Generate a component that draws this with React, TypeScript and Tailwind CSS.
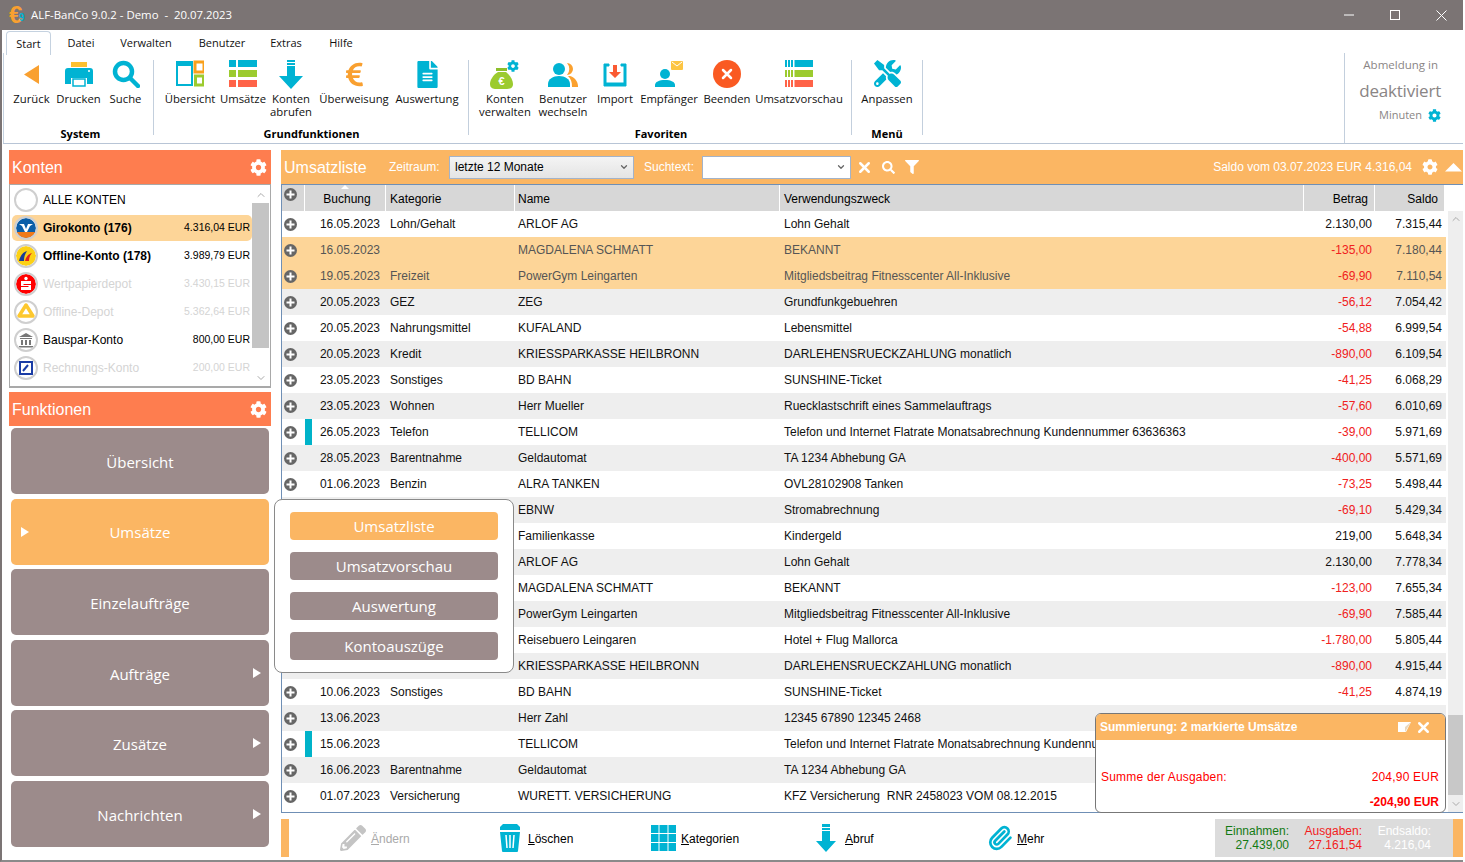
import { ReactNode } from "react";
import { FaCog, FaEuroSign, FaFileAlt, FaFilter, FaPencilAlt, FaSearch, FaTools } from "react-icons/fa";
import { ChevronDown, ChevronUp, Paperclip, X } from "lucide-react";

const TEAL = "#00b3d3";

interface Row {
  date: string;
  cat: string;
  name: string;
  text: string;
  amount: string;
  saldo: string;
  selected?: boolean;
  mark?: boolean;
}

const rows: Row[] = [
  { date: "16.05.2023", cat: "Lohn/Gehalt", name: "ARLOF AG", text: "Lohn Gehalt", amount: "2.130,00", saldo: "7.315,44" },
  { date: "16.05.2023", cat: "", name: "MAGDALENA SCHMATT", text: "BEKANNT", amount: "-135,00", saldo: "7.180,44", selected: true },
  { date: "19.05.2023", cat: "Freizeit", name: "PowerGym Leingarten", text: "Mitgliedsbeitrag Fitnesscenter All-Inklusive", amount: "-69,90", saldo: "7.110,54", selected: true },
  { date: "20.05.2023", cat: "GEZ", name: "ZEG", text: "Grundfunkgebuehren", amount: "-56,12", saldo: "7.054,42" },
  { date: "20.05.2023", cat: "Nahrungsmittel", name: "KUFALAND", text: "Lebensmittel", amount: "-54,88", saldo: "6.999,54" },
  { date: "20.05.2023", cat: "Kredit", name: "KRIESSPARKASSE HEILBRONN", text: "DARLEHENSRUECKZAHLUNG monatlich", amount: "-890,00", saldo: "6.109,54" },
  { date: "23.05.2023", cat: "Sonstiges", name: "BD BAHN", text: "SUNSHINE-Ticket", amount: "-41,25", saldo: "6.068,29" },
  { date: "23.05.2023", cat: "Wohnen", name: "Herr Mueller", text: "Ruecklastschrift eines Sammelauftrags", amount: "-57,60", saldo: "6.010,69" },
  { date: "26.05.2023", cat: "Telefon", name: "TELLICOM", text: "Telefon und Internet Flatrate Monatsabrechnung Kundennummer 63636363", amount: "-39,00", saldo: "5.971,69", mark: true },
  { date: "28.05.2023", cat: "Barentnahme", name: "Geldautomat", text: "TA 1234 Abhebung GA", amount: "-400,00", saldo: "5.571,69" },
  { date: "01.06.2023", cat: "Benzin", name: "ALRA TANKEN", text: "OVL28102908 Tanken", amount: "-73,25", saldo: "5.498,44" },
  { date: "", cat: "", name: "EBNW", text: "Stromabrechnung", amount: "-69,10", saldo: "5.429,34" },
  { date: "", cat: "", name: "Familienkasse", text: "Kindergeld", amount: "219,00", saldo: "5.648,34" },
  { date: "", cat: "", name: "ARLOF AG", text: "Lohn Gehalt", amount: "2.130,00", saldo: "7.778,34" },
  { date: "", cat: "", name: "MAGDALENA SCHMATT", text: "BEKANNT", amount: "-123,00", saldo: "7.655,34" },
  { date: "", cat: "", name: "PowerGym Leingarten", text: "Mitgliedsbeitrag Fitnesscenter All-Inklusive", amount: "-69,90", saldo: "7.585,44" },
  { date: "", cat: "", name: "Reisebuero Leingaren", text: "Hotel + Flug Mallorca", amount: "-1.780,00", saldo: "5.805,44" },
  { date: "", cat: "", name: "KRIESSPARKASSE HEILBRONN", text: "DARLEHENSRUECKZAHLUNG monatlich", amount: "-890,00", saldo: "4.915,44" },
  { date: "10.06.2023", cat: "Sonstiges", name: "BD BAHN", text: "SUNSHINE-Ticket", amount: "-41,25", saldo: "4.874,19" },
  { date: "13.06.2023", cat: "", name: "Herr Zahl", text: "12345 67890 12345 2468", amount: "", saldo: "" },
  { date: "15.06.2023", cat: "", name: "TELLICOM", text: "Telefon und Internet Flatrate Monatsabrechnung Kundennummer 63636363", amount: "", saldo: "", mark: true },
  { date: "16.06.2023", cat: "Barentnahme", name: "Geldautomat", text: "TA 1234 Abhebung GA", amount: "", saldo: "" },
  { date: "01.07.2023", cat: "Versicherung", name: "WURETT. VERSICHERUNG", text: "KFZ Versicherung  RNR 2458023 VOM 08.12.2015", amount: "", saldo: "" },
];

const GRID = "grid grid-cols-[23px_81px_129px_265px_524px_71px_70px]";

function PlusIcon() {
  return (
    <svg width="13" height="13" viewBox="0 0 13 13">
      <circle cx="6.5" cy="6.5" r="6.5" fill="#666" />
      <path d="M6.5 2.5v8M2.5 6.5h8" stroke="#fff" strokeWidth="2" />
    </svg>
  );
}

function RibbonItem({ w, icon, children }: { w: string; icon: ReactNode; children: ReactNode }) {
  return (
    <div className={`flex flex-col items-center shrink-0 ${w}`}>
      <div className="h-[32px] flex justify-center">{icon}</div>
      <div className="text-center text-[11.3px] leading-[13px] whitespace-nowrap text-[#111]">{children}</div>
    </div>
  );
}

function RibbonGroup({ label, w, children }: { label: string; w: string; children: ReactNode }) {
  return (
    <div className={`flex flex-col shrink-0 ${w}`}>
      <div className="flex h-[67px]">{children}</div>
      <div className="text-center text-[11px] leading-[14px] font-bold text-black">{label}</div>
    </div>
  );
}

function Sep() {
  return <div className="w-px h-[75px] bg-[#c3cfdd] shrink-0" />;
}

function BarsIcon({ stripes }: { stripes?: boolean }) {
  const bars = [TEAL, "#9ccb2f", "#ff6348"];
  return (
    <svg width="28" height="28" viewBox="0 0 28 28">
      {bars.map((c, i) => (
        <g key={c} fill={c}>
          {stripes ? (
            <>
              <rect x="0" y={i * 10} width="2" height="7" />
              <rect x="3" y={i * 10} width="2" height="7" />
              <rect x="6" y={i * 10} width="2" height="7" />
              <rect x="9.5" y={i * 10} width="18.5" height="7" />
            </>
          ) : (
            <>
              <rect x="0" y={i * 10} width="7" height="7" />
              <rect x="9" y={i * 10} width="19" height="7" />
            </>
          )}
        </g>
      ))}
    </svg>
  );
}

function Ribbon() {
  const tab = "flex items-center justify-center pt-[4px]";
  return (
    <div className="h-[114px] flex flex-col border-b border-[#b8c5d6] ml-px">
      <div className="flex h-[23px] pl-[3px] text-[11px] text-[#111]">
        <div className="w-[45px] h-[24px] mt-px border border-b-0 border-[#c5d2e0] rounded-t-sm bg-white flex items-center justify-center pt-[2px] z-10">Start</div>
        <div className={`w-[60px] ${tab}`}>Datei</div>
        <div className={`w-[70px] ${tab}`}>Verwalten</div>
        <div className={`w-[82px] ${tab}`}>Benutzer</div>
        <div className={`w-[46px] ${tab}`}>Extras</div>
        <div className={`w-[64px] ${tab}`}>Hilfe</div>
      </div>
      <div className="flex pt-[7px] border-l border-[#c5d2e0] grow">
        <div className="w-[4px] shrink-0" />
        <RibbonGroup label="System" w="w-[145px]">
          <RibbonItem w="w-[47px]" icon={
            <svg width="16" height="20" viewBox="0 0 16 20" className="mt-[5px]"><path d="M15 0v19L0 9.5z" fill="#f9a030" /></svg>
          }>Zurück</RibbonItem>
          <RibbonItem w="w-[47px]" icon={
            <svg width="28" height="28" viewBox="0 0 28 28">
              <rect x="6" y="2" width="16" height="5" fill="#fdc02f" />
              <path d="M3 8h22a3 3 0 0 1 3 3v13h-6v-6H6v6H0V11a3 3 0 0 1 3-3z" fill={TEAL} />
              <rect x="8" y="19" width="12" height="7" fill="#fff" stroke={TEAL} strokeWidth="1.5" />
              <circle cx="24" cy="11" r="1" fill="#fff" />
            </svg>
          }>Drucken</RibbonItem>
          <RibbonItem w="w-[47px]" icon={
            <svg width="28" height="28" viewBox="0 0 28 28">
              <circle cx="11.5" cy="11.5" r="8.5" fill="none" stroke={TEAL} strokeWidth="4.5" />
              <path d="M18 18l8 8" stroke={TEAL} strokeWidth="4.5" strokeLinecap="round" />
            </svg>
          }>Suche</RibbonItem>
        </RibbonGroup>
        <div className="w-px shrink-0 mr-[10px] bg-[#c3cfdd] h-[75px]" />
        <RibbonGroup label="Grundfunktionen" w="w-[295px]">
          <RibbonItem w="w-[52px]" icon={
            <svg width="28" height="28" viewBox="0 0 28 28">
              <rect x="1" y="2" width="15" height="23" fill="#fff" stroke={TEAL} strokeWidth="2" />
              <rect x="0" y="1" width="17" height="5" fill={TEAL} />
              <rect x="19" y="2" width="9" height="10" fill="#fff" stroke="#f9a01b" strokeWidth="3" />
              <rect x="19.5" y="16" width="8" height="9" fill="#fff" stroke="#9ccb2f" strokeWidth="3" />
            </svg>
          }>Übersicht</RibbonItem>
          <RibbonItem w="w-[54px]" icon={<BarsIcon />}>Umsätze</RibbonItem>
          <RibbonItem w="w-[42px]" icon={
            <svg width="24" height="30" viewBox="0 0 24 30">
              <path d="M8 0h8v2H8zM8 3h8v2H8zM8 6h8v10h8L12 29 0 16h8z" fill={TEAL} />
            </svg>
          }>Konten<br />abrufen</RibbonItem>
          <RibbonItem w="w-[84px]" icon={<FaEuroSign size={27} color="#f9a030" className="mt-[1px]" />}>Überweisung</RibbonItem>
          <RibbonItem w="w-[62px]" icon={<FaFileAlt size={27} color={TEAL} className="mt-[1px]" />}>Auswertung</RibbonItem>
        </RibbonGroup>
        <div className="w-[9px] shrink-0" />
        <Sep />
        <div className="w-[8px] shrink-0" />
        <RibbonGroup label="Favoriten" w="w-[368px]">
          <RibbonItem w="w-[56px]" icon={
            <svg width="30" height="30" viewBox="0 0 30 30">
              <rect x="6" y="8" width="11" height="3" fill="#8dbf2a" />
              <path d="M8 12h8c4 3 7 8 7 12 0 4-3 5-6 5H6c-3 0-6-1-6-5 0-4 3-9 8-12z" fill="#9ccb2f" />
              <text x="11.5" y="25" textAnchor="middle" fontSize="11" fontWeight="700" fill="#fff" fontFamily="'Liberation Sans', sans-serif">€</text>
              <g transform="translate(17 0)"><FaCog size={12} color={TEAL} /></g>
            </svg>
          }>Konten<br />verwalten</RibbonItem>
          <RibbonItem w="w-[60px]" icon={
            <svg width="30" height="26" viewBox="0 0 30 26" className="mt-[2px]">
              <path d="M19 1a6 6 0 0 1 0 12 9 9 0 0 0 0-12z" fill="#fba12f" />
              <path d="M22 14c4 1 8 5 8 10v1h-6c0-5-1-8-4-11z" fill="#fba12f" />
              <circle cx="11" cy="7" r="6" fill={TEAL} />
              <path d="M0 25v-3c0-5 5-8 11-8s11 3 11 8v3z" fill={TEAL} />
            </svg>
          }>Benutzer<br />wechseln</RibbonItem>
          <RibbonItem w="w-[44px]" icon={
            <svg width="24" height="24" viewBox="0 0 24 24" className="mt-[3px]">
              <path d="M1 1h5v2H3v17h18V3h-3V1h5v22H1z" fill={TEAL} stroke={TEAL} strokeWidth="1" />
              <path d="M10 2h4v7h4l-6 6-6-6h4z" fill="#fa5a32" />
            </svg>
          }>Import</RibbonItem>
          <RibbonItem w="w-[64px]" icon={
            <svg width="28" height="28" viewBox="0 0 28 28">
              <rect x="16" y="1" width="12" height="9" rx="1" fill="#fdc543" />
              <path d="M17 2l5 4 5-4" fill="none" stroke="#fff" strokeWidth="1" />
              <circle cx="10" cy="14" r="5" fill={TEAL} />
              <path d="M0 27v-2c0-3 4-5 10-5s10 2 10 5v2z" fill={TEAL} />
            </svg>
          }>Empfänger</RibbonItem>
          <RibbonItem w="w-[52px]" icon={
            <svg width="28" height="28" viewBox="0 0 28 28">
              <circle cx="14" cy="14" r="14" fill="#fa5a22" />
              <path d="M10 10l8 8M18 10l-8 8" stroke="#fff" strokeWidth="2.5" strokeLinecap="round" />
            </svg>
          }>Beenden</RibbonItem>
          <RibbonItem w="w-[92px]" icon={<BarsIcon stripes />}>Umsatzvorschau</RibbonItem>
        </RibbonGroup>
        <div className="w-[6px] shrink-0" />
        <Sep />
        <RibbonGroup label="Menü" w="w-[70px]">
          <div className="w-[70px] flex justify-center">
            <RibbonItem w="w-[60px]" icon={<FaTools size={27} color={TEAL} />}>Anpassen</RibbonItem>
          </div>
        </RibbonGroup>
        <Sep />
        <div className="grow" />
        <div className="w-[119px] shrink-0 border-l border-[#c3cfdd] -mt-[7px] flex flex-col items-end pr-[25px] pt-[4px] text-[#8a8585]">
          <div className="text-[11.5px] leading-[16px]">Abmeldung in</div>
          <div className="text-[17px] leading-[24px] mt-[6px] -mr-[3px] tracking-[-0.2px]">deaktiviert</div>
          <div className="flex items-center gap-[6px] text-[11px] leading-[16px] mt-[4px] -mr-[3px]">Minuten <FaCog size={13} color={TEAL} /></div>
        </div>
      </div>
    </div>
  );
}

function Logo({ children }: { children?: ReactNode }) {
  return (
    <div className="w-[24px] h-[24px] rounded-full border-2 border-[#cfcfcf] bg-white flex items-center justify-center overflow-hidden shrink-0">
      {children}
    </div>
  );
}

const accounts: { name: string; value: string; bold?: boolean; dim?: boolean; selected?: boolean; logo?: ReactNode }[] = [
  { name: "ALLE KONTEN", value: "" },
  {
    name: "Girokonto (176)", value: "4.316,04 EUR", bold: true, selected: true,
    logo: (
      <svg width="20" height="20" viewBox="0 0 20 20">
        <circle cx="10" cy="10" r="10" fill="#0b5ea8" />
        <path d="M0 14h20v6H0z" fill="#f07a1a" />
        <path d="M3 6h5l2 5 2-5h5l-3 2-3 6H9L6 8z" fill="#fff" />
      </svg>
    ),
  },
  {
    name: "Offline-Konto (178)", value: "3.989,79 EUR", bold: true,
    logo: (
      <svg width="20" height="20" viewBox="0 0 20 20">
        <circle cx="10" cy="10" r="10" fill="#fcd116" />
        <path d="M3 15c1-5 4-9 8-10-2 3-3 6-3 10z" fill="#1a3e94" />
        <path d="M9 15c1-4 3-7 7-8-2 2-3 5-3 8z" fill="#e2231a" />
      </svg>
    ),
  },
  {
    name: "Wertpapierdepot", value: "3.430,15 EUR", dim: true,
    logo: (
      <svg width="20" height="20" viewBox="0 0 20 20">
        <circle cx="10" cy="10" r="10" fill="#f00" />
        <circle cx="10" cy="4.5" r="1.7" fill="#fff" />
        <path d="M5 7h10v3H7.5v1H15v5H5v-3h7.5v-1H5z" fill="#fff" />
      </svg>
    ),
  },
  {
    name: "Offline-Depot", value: "5.362,64 EUR", dim: true,
    logo: (
      <svg width="20" height="20" viewBox="0 0 20 20">
        <path d="M10 3l7 11H3z" fill="none" stroke="#fdc82f" strokeWidth="3.5" strokeLinejoin="round" />
      </svg>
    ),
  },
  {
    name: "Bauspar-Konto", value: "800,00 EUR",
    logo: (
      <svg width="16" height="16" viewBox="0 0 16 16">
        <path d="M8 1l7 4H1zM2 6h12v1H2zM3 8h2v5H3zM7 8h2v5H7zM11 8h2v5h-2zM1 14h14v1.500H1z" fill="#777" />
      </svg>
    ),
  },
  {
    name: "Rechnungs-Konto", value: "200,00 EUR", dim: true,
    logo: (
      <svg width="14" height="14" viewBox="0 0 14 14">
        <rect x="1" y="1" width="12" height="12" fill="#fff" stroke="#1b3da6" strokeWidth="2" />
        <path d="M4 10l5-6" stroke="#1b3da6" strokeWidth="2" />
      </svg>
    ),
  },
];

function PanelHeader({ title }: { title: string }) {
  return (
    <div className="h-[34px] bg-[#fe7d4f] flex items-center justify-between pl-[3px] pr-[4px] text-white text-[16px]">
      <span className="mt-[2.5px]">{title}</span>
      <FaCog size={17} color="#fff" />
    </div>
  );
}

function AccountList() {
  return (
    <div className="h-[204px] border border-[#a9a9a9] border-b-2 flex bg-white">
      <div className="w-[242px] shrink-0 pl-[2px] pt-px flex flex-col">
        {accounts.map((a) => (
          <div
            key={a.name}
            className={`h-[26px] my-px flex items-center pl-[2px] pr-[2px] rounded-[5px] ${a.selected ? "bg-[#fdd598]" : ""}`}
          >
            <Logo>{a.logo}</Logo>
            <span className={`ml-[5px] grow text-[12px] ${a.bold ? "font-bold text-black" : a.dim ? "text-[#d4d4d4]" : "text-black"}`}>{a.name}</span>
            <span className={`text-[10.5px] ${a.dim ? "text-[#d4d4d4]" : "text-black"}`}>{a.value}</span>
          </div>
        ))}
      </div>
      <div className="w-[17px] flex flex-col items-center text-[#aaa]">
        <div className="h-[18px] pt-[2px] flex items-center"><ChevronUp size={12} /></div>
        <div className="w-full h-[145px] bg-[#c4c4c4]" />
        <div className="grow flex items-end pb-[2px]"><ChevronDown size={12} /></div>
      </div>
    </div>
  );
}

function FnButton({ label, active, arrow }: { label: string; active?: boolean; arrow?: "left" | "right" }) {
  return (
    <div className={`relative h-[66px] rounded-[5px] flex items-center justify-center pt-[2px] text-[15px] text-white font-['Open_Sans',sans-serif] ${active ? "bg-[#fbb663]" : "bg-[#9c8b8b]"}`}>
      {label}
      {arrow && (
        <svg width="8" height="10" viewBox="0 0 8 10" className={`absolute top-[28px] ${arrow === "left" ? "left-[10px]" : "right-[8px]"}`}>
          <path d="M0 0l8 5-8 5z" fill="#fff" />
        </svg>
      )}
    </div>
  );
}

function Sidebar() {
  return (
    <div className="w-[262px] ml-[7px] shrink-0 flex flex-col">
      <PanelHeader title="Konten" />
      <AccountList />
      <div className="mt-[4px]"><PanelHeader title="Funktionen" /></div>
      <div className="mt-[2px] px-[2px] flex flex-col gap-[4.6px]">
        <FnButton label="Übersicht" />
        <FnButton label="Umsätze" active arrow="left" />
        <FnButton label="Einzelaufträge" />
        <FnButton label="Aufträge" arrow="right" />
        <FnButton label="Zusätze" arrow="right" />
        <FnButton label="Nachrichten" arrow="right" />
      </div>
    </div>
  );
}

function Toolbar() {
  return (
    <div className="h-[34px] bg-[#fbb663] flex items-center text-white pl-[3px]">
      <span className="text-[16px] w-[105px] shrink-0 mt-[2px]">Umsatzliste</span>
      <span className="text-[12px] w-[60px] shrink-0">Zeitraum:</span>
      <div className="w-[185px] h-[23px] shrink-0 border border-[#a3b3c9] bg-gradient-to-b from-[#f4f4f4] to-[#e4e4e4] flex items-center justify-between pl-[5px] pr-[4px] text-[12px] text-black">
        letzte 12 Monate
        <ChevronDown size={10} color="#666" strokeWidth={3} />
      </div>
      <span className="text-[12px] w-[58px] ml-[10px] shrink-0">Suchtext:</span>
      <div className="w-[149px] h-[23px] shrink-0 border border-[#a3b3c9] bg-white flex items-center justify-end pr-[4px]">
        <ChevronDown size={10} color="#666" strokeWidth={3} />
      </div>
      <X size={17} color="#fff" strokeWidth={3.500} className="ml-[5px] shrink-0" />
      <FaSearch size={13} color="#fff" className="ml-[9px] shrink-0" />
      <FaFilter size={14} color="#fff" className="ml-[10px] shrink-0" />
      <div className="grow text-right text-[12px]">Saldo vom 03.07.2023 EUR 4.316,04</div>
      <FaCog size={16} color="#fff" className="ml-[10px] shrink-0" />
      <svg width="17" height="9" viewBox="0 0 17 9" className="ml-[7px] mr-px shrink-0"><path d="M8.500 0L17 8.500H0z" fill="#fff" /></svg>
    </div>
  );
}

function HeaderCell({ children, className = "" }: { children?: ReactNode; className?: string }) {
  return <div className={`bg-[#d7d7d7] border-r border-white flex items-center pt-[2px] ${className}`}>{children}</div>;
}

function TxRow({ row, index }: { row: Row; index: number }) {
  const bg = row.selected ? "bg-[#fdd598]" : index % 2 ? "bg-[#eeeeee]" : "bg-white";
  const tone = row.selected ? "text-[#555]" : "text-[#111]";
  return (
    <div className={`${GRID} h-[26px] items-center text-[12px] ${bg} ${tone}`}>
      <div className="pl-[2px] flex items-center h-full"><PlusIcon /></div>
      <div className="relative h-full flex items-center justify-end pr-[6px]">
        {row.mark && <div className="absolute left-0 top-0 w-[7px] h-full bg-[#00b3c9]" />}
        {row.date}
      </div>
      <div className="pl-[4px] truncate">{row.cat}</div>
      <div className="pl-[3px] truncate">{row.name}</div>
      <div className="pl-[4px] whitespace-pre truncate">{row.text}</div>
      <div className={`text-right pr-[3px] ${row.amount.startsWith("-") ? "text-[#f02020]" : ""}`}>{row.amount}</div>
      <div className="text-right pr-[3px]">{row.saldo}</div>
    </div>
  );
}

function Table() {
  return (
    <div className="h-[629px] border-t border-b border-l border-[#6f8fb5] flex">
      <div className="w-[1164px] shrink-0">
        <div className={`${GRID} h-[26px] text-[12px] text-black`}>
          <HeaderCell className="pl-[2px] !pt-0 !items-start"><div className="mt-[3px]"><PlusIcon /></div></HeaderCell>
          <HeaderCell className="relative justify-center pl-[4px]">
            <svg width="8" height="4" viewBox="0 0 8 4" className="absolute top-0 left-[36px]"><path d="M4 0l4 4H0z" fill="#fff" /></svg>
            Buchung
          </HeaderCell>
          <HeaderCell className="pl-[4px]">Kategorie</HeaderCell>
          <HeaderCell className="pl-[3px]">Name</HeaderCell>
          <HeaderCell className="pl-[4px]">Verwendungszweck</HeaderCell>
          <HeaderCell className="justify-end pr-[6px]">Betrag</HeaderCell>
          <HeaderCell className="justify-end pr-[6px]">Saldo</HeaderCell>
        </div>
        {rows.map((r, i) => <TxRow key={i} row={r} index={i} />)}
      </div>
      <div className="w-[16px] ml-[2px] mt-[26px] bg-[#eeeeee] flex flex-col items-center text-[#aaa]">
        <div className="h-[16px] flex items-center"><ChevronUp size={12} /></div>
        <div className="mt-[488px] h-[80px] w-full bg-[#c8c8c8]" />
        <div className="grow flex items-center"><ChevronDown size={12} /></div>
      </div>
    </div>
  );
}

function ActionButton({ w, icon, label, rest, muted, gap = "ml-[6px]" }: { w: string; icon: ReactNode; label: string; rest: string; muted?: boolean; gap?: string }) {
  return (
    <div className={`flex items-center shrink-0 ${w}`}>
      {icon}
      <span className={`text-[12px] mt-[1px] ${gap} ${muted ? "text-[#aaa]" : "text-black"}`}>
        <span className="underline">{label}</span>{rest}
      </span>
    </div>
  );
}

function ActionBar() {
  return (
    <div className="mt-[6px] h-[38px] flex">
      <div className="w-[8px] bg-[#fbb663] shrink-0" />
      <div className="w-[51px] shrink-0" />
      <ActionButton w="w-[159px]" muted gap="ml-[5px]" label="Ä" rest="ndern" icon={<FaPencilAlt size={26} color="#c4c4c4" />} />
      <ActionButton w="w-[152px]" gap="ml-[7px]" label="L" rest="öschen" icon={
        <svg width="22" height="28" viewBox="0 0 22 28">
          <path d="M4 0h14l3 3v3H1V3z" fill="#00b3d3" />
          <path d="M1 8h20l-2 19a1 1 0 0 1-1 1H4a1 1 0 0 1-1-1z" fill="#00b3d3" />
          <path d="M7 11l1 13M11 11v13M15 11l-1 13" stroke="#fff" strokeWidth="1.500" />
        </svg>
      } />
      <ActionButton w="w-[165px]" gap="ml-[5px]" label="K" rest="ategorien" icon={
        <svg width="25" height="26" viewBox="0 0 25 26">
          <path d="M0 0h7.500v8H0zM8.500 0h8v8h-8zM17.500 0H25v8h-7.500zM0 9h7.500v8H0zM8.500 9h8v8h-8zM17.500 9H25v8h-7.500zM0 18h7.500v8H0zM8.500 18h8v8h-8zM17.500 18H25v8h-7.500z" fill="#00b3d3" />
        </svg>
      } />
      <ActionButton w="w-[171px]" gap="ml-[9px]" label="A" rest="bruf" icon={
        <svg width="20" height="28" viewBox="0 0 20 28">
          <path d="M6 0h8v3H6zM6 4h8v2H6zM6 7h8v10h6L10 28 0 17h6z" fill="#00b3d3" />
        </svg>
      } />
      <ActionButton w="w-[100px]" gap="ml-[4px]" label="M" rest="ehr" icon={<Paperclip size={26} color="#00b3d3" strokeWidth={2.500} />} />
      <div className="grow" />
      <div className="w-[238px] shrink-0 bg-[#dcdcdc] flex items-center pl-[10px] text-[12px] leading-[14px] text-right">
        <div className="w-[64px] text-[#137a13]">Einnahmen:<br />27.439,00</div>
        <div className="w-[73px] text-[#f21c1c]">Ausgaben:<br />27.161,54</div>
        <div className="w-[69px] text-white">Endsaldo:<br />4.216,04</div>
      </div>
      <div className="w-[10px] bg-[#fbb663] shrink-0" />
    </div>
  );
}

function SubMenu() {
  const items = ["Umsatzvorschau", "Auswertung", "Kontoauszüge"];
  const cls = "h-[28px] rounded-[4px] flex items-center justify-center pt-[1px] text-white text-[15px] font-['Open_Sans',sans-serif]";
  return (
    <div className="absolute left-[274px] top-[499px] w-[240px] h-[174px] bg-white border border-[#8a8a8a] rounded-[8px] px-[15px] pt-[12px] flex flex-col gap-[12px] z-20">
      <div className={`${cls} bg-[#fbb663]`}>Umsatzliste</div>
      {items.map((t) => <div key={t} className={`${cls} bg-[#9c8b8b]`}>{t}</div>)}
    </div>
  );
}

function SummaryPopup() {
  return (
    <div className="absolute left-[1095px] top-[713px] w-[351px] h-[100px] bg-white border border-[#777] rounded-[6px] overflow-hidden z-20 text-[12px]">
      <div className="h-[26px] bg-[#fbb663] text-white font-bold flex items-center pl-[4px] pr-[13px]">
        <span className="grow">Summierung: 2 markierte Umsätze</span>
        <svg width="13" height="12" viewBox="0 0 13 12"><path d="M0 1h13L8 11H0z" fill="#fff" /><path d="M13 1L7 6v5z" fill="#e8d8c0" /></svg>
        <X size={17} color="#fff" strokeWidth={3.500} className="ml-[4px]" />
      </div>
      <div className="mt-[28px] flex justify-between pl-[5px] pr-[6px] text-[#f00] tracking-[0.2px]">
        <span>Summe der Ausgaben:</span>
        <span>204,90 EUR</span>
      </div>
      <div className="mt-[7px] text-right pr-[6px] text-[#f00] font-bold">-204,90 EUR</div>
    </div>
  );
}

export default function App() {
  return (
    <div className="relative w-[1465px] h-[862px] bg-white overflow-hidden font-['Liberation_Sans',Arial,sans-serif]">
      <div className="w-[1463px] h-[862px] flex flex-col border-l-2 border-[#7b7474] border-b-2 border-b-[#8a8a8a]">
        {/* Title bar */}
        <div className="h-[30px] -ml-[2px] bg-[#7b7474] flex items-center text-white shrink-0 font-['Open_Sans',sans-serif]">
          <div className="relative w-[26px] pl-[9px] text-[24px] font-bold leading-none text-[#f9a030] font-['Liberation_Sans',sans-serif]">
            €
            <span className="absolute left-[19px] top-[10px] text-[10px] text-[#00b3d3]">9</span>
          </div>
          <span className="ml-[5px] text-[11.4px] whitespace-pre">ALF-BanCo 9.0.2 - Demo  -  20.07.2023</span>
          <div className="grow" />
          <svg width="10" height="10" viewBox="0 0 10 10" className="mr-[36px]"><path d="M0 5h10" stroke="#fff" /></svg>
          <svg width="10" height="10" viewBox="0 0 10 10" className="mr-[36px]"><rect x=".5" y=".5" width="9" height="9" fill="none" stroke="#fff" /></svg>
          <svg width="11" height="11" viewBox="0 0 11 11" className="mr-[16px]"><path d="M.5.500l10 10M10.500.500l-10 10" stroke="#fff" /></svg>
        </div>
        <div className="font-['Open_Sans',sans-serif]">
          <Ribbon />
        </div>
        <div className="flex mt-[6px]">
          <Sidebar />
          <div className="w-[10px] shrink-0" />
          <div className="grow min-w-0">
            <Toolbar />
            <Table />
            <ActionBar />
          </div>
        </div>
      </div>
      <SubMenu />
      <SummaryPopup />
    </div>
  );
}
